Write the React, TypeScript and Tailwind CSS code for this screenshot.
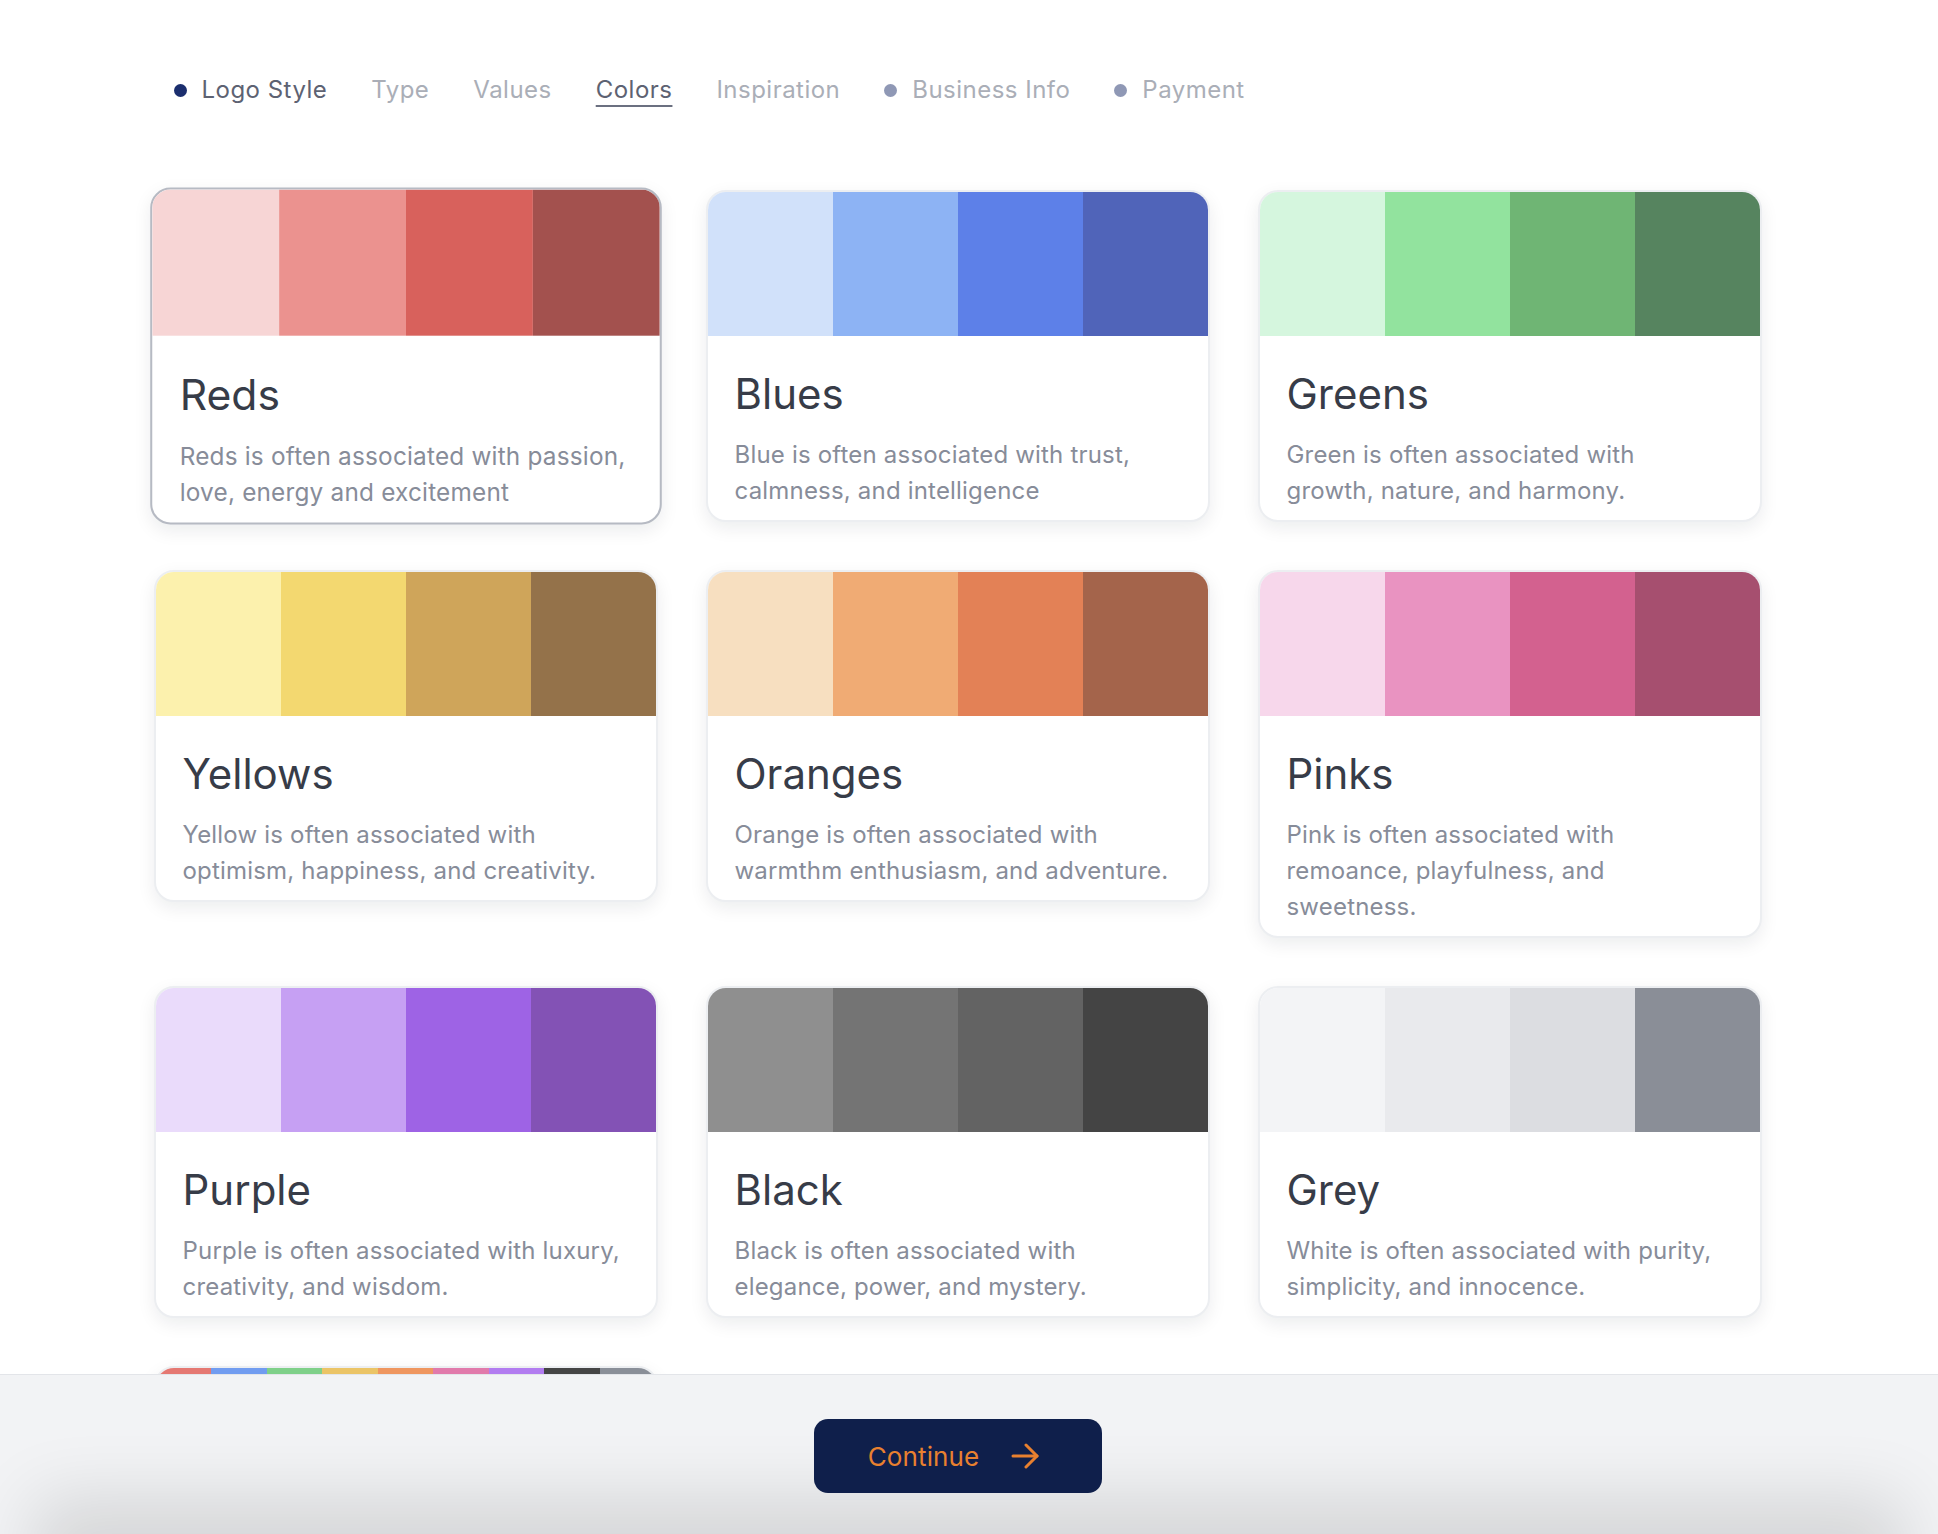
import React from "react";

type Palette = {
  name: string;
  swatches: string[];
  lines: string[];
  selected?: boolean;
};

const palettes: Palette[] = [
  {
    name: "Reds",
    swatches: ["bg-[#f7d5d5]", "bg-[#eb928f]", "bg-[#d8615c]", "bg-[#a3514e]"],
    lines: ["Reds is often associated with passion,", "love, energy and excitement"],
    selected: true,
  },
  {
    name: "Blues",
    swatches: ["bg-[#d1e1fa]", "bg-[#8db3f4]", "bg-[#5d80e8]", "bg-[#5064b9]"],
    lines: ["Blue is often associated with trust,", "calmness, and intelligence"],
  },
  {
    name: "Greens",
    swatches: ["bg-[#d5f6de]", "bg-[#92e39e]", "bg-[#6fb574]", "bg-[#56845f]"],
    lines: ["Green is often associated with", "growth, nature, and harmony."],
  },
  {
    name: "Yellows",
    swatches: ["bg-[#fcf1ad]", "bg-[#f3d870]", "bg-[#cfa55a]", "bg-[#94724a]"],
    lines: ["Yellow is often associated with", "optimism, happiness, and creativity."],
  },
  {
    name: "Oranges",
    swatches: ["bg-[#f7dfc0]", "bg-[#f0ab74]", "bg-[#e38156]", "bg-[#a4644b]"],
    lines: ["Orange is often associated with", "warmthm enthusiasm, and adventure."],
  },
  {
    name: "Pinks",
    swatches: ["bg-[#f7d7eb]", "bg-[#e993c1]", "bg-[#d3618f]", "bg-[#a64f6f]"],
    lines: ["Pink is often associated with", "remoance, playfulness, and", "sweetness."],
  },
  {
    name: "Purple",
    swatches: ["bg-[#eadbfb]", "bg-[#c6a0f3]", "bg-[#9e63e5]", "bg-[#8352b5]"],
    lines: ["Purple is often associated with luxury,", "creativity, and wisdom."],
  },
  {
    name: "Black",
    swatches: ["bg-[#8f8f8f]", "bg-[#747474]", "bg-[#636363]", "bg-[#444444]"],
    lines: ["Black is often associated with", "elegance, power, and mystery."],
  },
  {
    name: "Grey",
    swatches: ["bg-[#f3f4f6]", "bg-[#e9eaed]", "bg-[#dcdde1]", "bg-[#8a8e97]"],
    lines: ["White is often associated with purity,", "simplicity, and innocence."],
  },
  {
    name: "Multicolor",
    swatches: [
      "bg-[#e57872]",
      "bg-[#719cf0]",
      "bg-[#7fd089]",
      "bg-[#ebc466]",
      "bg-[#ef965f]",
      "bg-[#e17aab]",
      "bg-[#b27cf0]",
      "bg-[#454545]",
      "bg-[#8a8f98]",
    ],
    lines: ["A mix of every colour, for brands", "that are bold and playful."],
  },
];

function Card({ p }: { p: Palette }) {
  const outer = p.selected
    ? "overflow-hidden rounded-[20px] border-2 border-[#b6bac3] bg-white shadow-[0_6px_18px_rgba(17,24,39,0.08)] scale-[1.015]"
    : "overflow-hidden rounded-[20px] border-2 border-[#eceef1] bg-white shadow-[0_6px_18px_rgba(17,24,39,0.08)]";
  return (
    <div className={outer}>
      <div className="flex h-36">
        {p.swatches.map((c, i) => (
          <div key={i} className={"flex-1 " + c} />
        ))}
      </div>
      <div className="px-[27px] pt-[33px] pb-[11px]">
        <h3 className="text-[42px] leading-[50px] font-normal text-[#373c48]">{p.name}</h3>
        <p className="mt-[18px] text-[24px] leading-[36px] text-[#878c99] tracking-[0.008em]">
          {p.lines.map((l, i) => (
            <span key={i} className="block whitespace-nowrap">
              {l}
            </span>
          ))}
        </p>
      </div>
    </div>
  );
}

export default function App() {
  return (
    <div className="min-h-screen bg-white font-['Inter','Noto_Sans',sans-serif]">
      <div className="w-[1915px] pb-[260px]">
        <div className="mx-auto w-[1608px]">
          <nav className="flex items-center gap-[44px] pl-[20px] pt-[74px] text-[24px] leading-[32px] tracking-[0.02em]">
            <div className="flex items-center gap-[15px]">
              <span className="h-[13px] w-[13px] rounded-full bg-[#1b2e6e]" />
              <span className="text-[#5d6272]">Logo Style</span>
            </div>
            <span className="text-[#aaaeb7]">Type</span>
            <span className="text-[#aaaeb7]">Values</span>
            <span className="text-[#5d6272] underline decoration-2 underline-offset-[7px] decoration-[#6b7080]">Colors</span>
            <span className="text-[#aaaeb7]">Inspiration</span>
            <div className="flex items-center gap-[15px]">
              <span className="h-[13px] w-[13px] rounded-full bg-[#8f98b5]" />
              <span className="text-[#aaaeb7]">Business Info</span>
            </div>
            <div className="flex items-center gap-[15px]">
              <span className="h-[13px] w-[13px] rounded-full bg-[#8f98b5]" />
              <span className="text-[#aaaeb7]">Payment</span>
            </div>
          </nav>

          <div className="mt-[84px] grid grid-cols-3 items-start gap-12">
            {palettes.map((p) => (
              <Card key={p.name} p={p} />
            ))}
          </div>
        </div>
      </div>

      <footer className="fixed inset-x-0 bottom-0 h-[160px] overflow-hidden border-t border-[#e3e5e9] bg-[#f2f3f5]">
        <div className="pointer-events-none absolute left-[70px] right-[70px] bottom-[-40px] h-[40px] shadow-[0_0_70px_36px_rgba(0,0,0,0.12)]" />
        <div className="relative flex w-[1915px] justify-center pt-[44px]">
          <button className="flex h-[74px] w-[288px] items-center justify-center gap-[32px] rounded-[14px] bg-[#0f1f4b] pr-[8px] text-[26px] tracking-[0.005em] text-[#e8802f]">
            <span>Continue</span>
            <svg width="28" height="28" viewBox="0 0 28 28" fill="none" stroke="#e8802f" strokeWidth="3" strokeLinecap="round" strokeLinejoin="round">
              <path d="M2 14h24" />
              <path d="M15 3l11 11-11 11" />
            </svg>
          </button>
        </div>
      </footer>
    </div>
  );
}
